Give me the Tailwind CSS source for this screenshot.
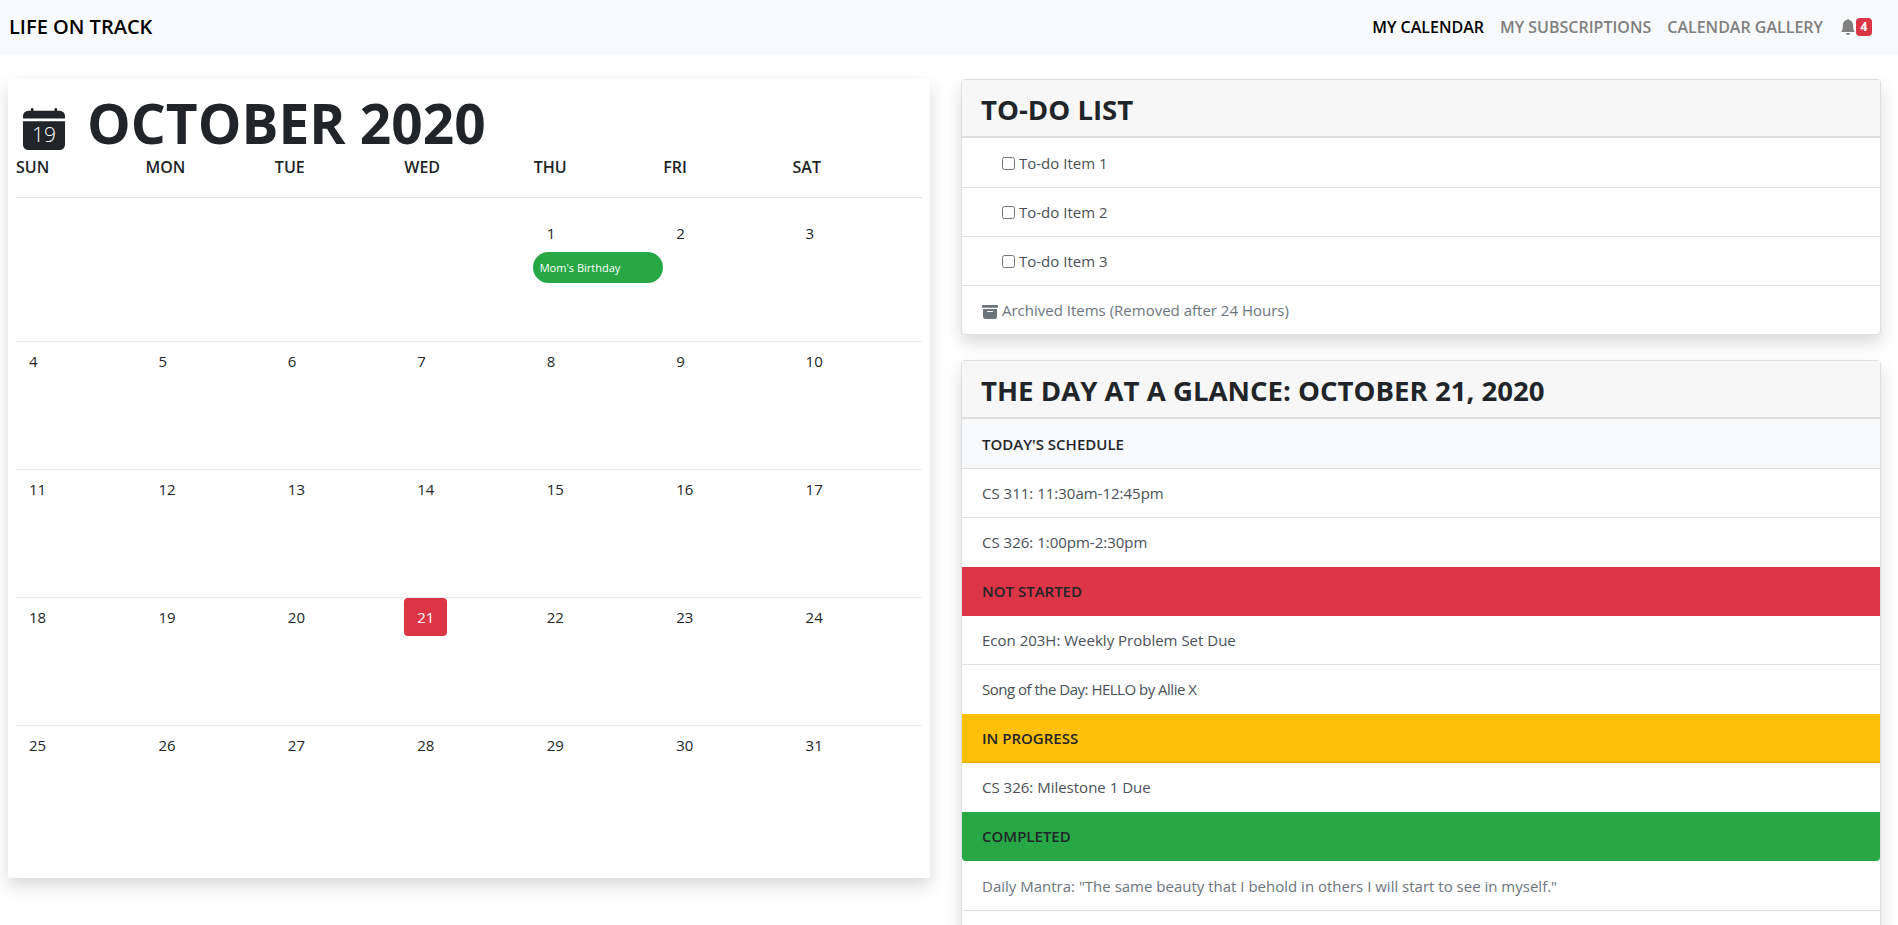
<!DOCTYPE html>
<html lang="en">
<head>
  <meta charset="UTF-8">
  <title>Life On Track</title>
  <meta name="viewport" content="width=device-width, initial-scale=1.0">
  <script src="https://cdn.jsdelivr.net/npm/@tailwindcss/browser@4"></script>
</head>
<body class="h-screen overflow-hidden bg-white font-['Open_Sans',sans-serif] text-[15px] leading-6 text-[#212529]">

  <!-- Navbar -->
  <nav class="flex h-[55px] items-center justify-between bg-[#f8f9fa] pb-[2px] pl-[9px] pr-[26px]">
    <a class="text-[20px] font-semibold text-black">LIFE ON TRACK</a>
    <div class="flex items-center text-[16px] font-semibold text-[#7f7f7f]">
      <a class="text-black">MY CALENDAR</a>
      <a class="ml-4">MY SUBSCRIPTIONS</a>
      <a class="ml-4">CALENDAR GALLERY</a>
      <svg class="ml-[17px] size-4" viewBox="0 0 16 16" fill="currentColor"><path d="M8 16a2 2 0 0 0 2-2H6a2 2 0 0 0 2 2zm.995-14.901a1 1 0 1 0-1.99 0A5.002 5.002 0 0 0 3 6c0 1.098-.5 6-2 7h14c-1.5-1-2-5.902-2-7 0-2.42-1.72-4.44-4.005-4.901z"/></svg>
      <span class="flex h-[18px] w-4 items-center justify-center rounded bg-[#dc3545] text-[12px] font-bold text-white">4</span>
    </div>
  </nav>

  <main class="flex items-start pl-2 pr-[17px] pt-6">

    <!-- Calendar -->
    <section class="h-[799px] w-[922px] shrink-0 bg-white px-2 shadow-[0_8px_16px_rgba(0,0,0,0.15)]">
      <div class="flex h-[76px] items-center pl-[7px] pt-[10px]">
        <svg class="mt-[13px] size-[42px] shrink-0" viewBox="0 0 16 16" fill="#212529">
          <path d="M3.5 0a.5.5 0 0 1 .5.5V1h8V.5a.5.5 0 0 1 1 0V1h1a2 2 0 0 1 2 2v11a2 2 0 0 1-2 2H2a2 2 0 0 1-2-2V5h16V4H0V3a2 2 0 0 1 2-2h1V.5a.5.5 0 0 1 .5-.5z"/>
          <text x="8" y="13.1" text-anchor="middle" font-size="8" font-weight="300" fill="#fff">19</text>
        </svg>
        <h1 class="ml-[22px] text-[55px] leading-none font-bold">OCTOBER 2020</h1>
      </div>

      <div class="grid h-[43px] grid-cols-7 border-b border-[#dee2e6] text-[16px] font-semibold">
        <div>SUN</div><div>MON</div><div>TUE</div><div>WED</div><div>THU</div><div>FRI</div><div>SAT</div>
      </div>

      <!-- Week 1 -->
      <div class="grid h-[144px] grid-cols-7 border-b border-[#e9ecef] pt-4">
        <div></div><div></div><div></div><div></div>
        <div>
          <button class="block h-[38px] px-[13px] text-center">1</button>
          <div class="-ml-px flex h-[31px] items-center rounded-2xl bg-[#28a745] px-[7px] text-[11px] text-white">Mom's Birthday</div>
        </div>
        <div><button class="block h-[38px] px-[13px]">2</button></div>
        <div><button class="block h-[38px] px-[13px]">3</button></div>
      </div>

      <div class="grid h-[128px] grid-cols-7 content-start border-b border-[#e9ecef]">
        <button class="h-[38px] w-fit px-[13px]">4</button><button class="h-[38px] w-fit px-[13px]">5</button><button class="h-[38px] w-fit px-[13px]">6</button><button class="h-[38px] w-fit px-[13px]">7</button><button class="h-[38px] w-fit px-[13px]">8</button><button class="h-[38px] w-fit px-[13px]">9</button><button class="h-[38px] w-fit px-[13px]">10</button>
      </div>
      <div class="grid h-[128px] grid-cols-7 content-start border-b border-[#e9ecef]">
        <button class="h-[38px] w-fit px-[13px]">11</button><button class="h-[38px] w-fit px-[13px]">12</button><button class="h-[38px] w-fit px-[13px]">13</button><button class="h-[38px] w-fit px-[13px]">14</button><button class="h-[38px] w-fit px-[13px]">15</button><button class="h-[38px] w-fit px-[13px]">16</button><button class="h-[38px] w-fit px-[13px]">17</button>
      </div>
      <div class="grid h-[128px] grid-cols-7 content-start border-b border-[#e9ecef]">
        <button class="h-[38px] w-fit px-[13px]">18</button><button class="h-[38px] w-fit px-[13px]">19</button><button class="h-[38px] w-fit px-[13px]">20</button><button class="h-[38px] w-[43px] rounded bg-[#dc3545] text-white">21</button><button class="h-[38px] w-fit px-[13px]">22</button><button class="h-[38px] w-fit px-[13px]">23</button><button class="h-[38px] w-fit px-[13px]">24</button>
      </div>
      <div class="grid grid-cols-7 content-start">
        <button class="h-[38px] w-fit px-[13px]">25</button><button class="h-[38px] w-fit px-[13px]">26</button><button class="h-[38px] w-fit px-[13px]">27</button><button class="h-[38px] w-fit px-[13px]">28</button><button class="h-[38px] w-fit px-[13px]">29</button><button class="h-[38px] w-fit px-[13px]">30</button><button class="h-[38px] w-fit px-[13px]">31</button>
      </div>
    </section>

    <div class="ml-[31px] min-w-0 flex-1">

      <!-- To-do list -->
      <section class="rounded border border-[#dfdfdf] bg-white shadow-[0_8px_16px_rgba(0,0,0,0.15)]">
        <h3 class="flex h-[58px] items-center border-b-2 border-[#dfdfdf] bg-[#f7f7f7] pl-[19px] pt-[2px] text-[27.6px] font-bold">TO-DO LIST</h3>
        <div class="flex h-[50px] items-center border-b border-[#dfdfdf] pl-10 pt-px text-[#495057]"><input type="checkbox" class="mr-1 size-[13px] appearance-auto">To-do Item 1</div>
        <div class="flex h-[49px] items-center border-b border-[#dfdfdf] pl-10 text-[#495057]"><input type="checkbox" class="mr-1 size-[13px] appearance-auto">To-do Item 2</div>
        <div class="flex h-[49px] items-center border-b border-[#dfdfdf] pl-10 text-[#495057]"><input type="checkbox" class="mr-1 size-[13px] appearance-auto">To-do Item 3</div>
        <div class="flex h-[48px] items-center pl-5 text-[#6c757d]">
          <svg class="mr-1 mt-[3px] size-4" viewBox="0 0 16 16" fill="currentColor"><path d="M12.643 15C13.979 15 15 13.845 15 12.5V5H1v7.5C1 13.845 2.021 15 3.357 15h9.286zM5.5 7h5a.5.5 0 0 1 0 1h-5a.5.5 0 0 1 0-1zM.8 1a.8.8 0 0 0-.8.8V3a.8.8 0 0 0 .8.8h14.4A.8.8 0 0 0 16 3V1.8a.8.8 0 0 0-.8-.8H.8z"/></svg>
          Archived Items (Removed after 24 Hours)
        </div>
      </section>

      <!-- Day at a glance -->
      <section class="mt-[25px] rounded border border-[#dfdfdf] bg-white shadow-[0_8px_16px_rgba(0,0,0,0.15)]">
        <h3 class="flex h-[58px] items-center border-b-2 border-[#dfdfdf] bg-[#f7f7f7] pl-[19px] pt-[2px] text-[27.6px] font-bold">THE DAY AT A GLANCE: OCTOBER 21, 2020</h3>
        <div class="flex h-[50px] items-center border-b border-[#dfdfdf] bg-[#f8f9fa] px-5 pt-px font-semibold">TODAY'S SCHEDULE</div>
        <div class="flex h-[49px] items-center border-b border-[#dfdfdf] px-5 text-[#495057]">CS 311: 11:30am-12:45pm</div>
        <div class="flex h-[49px] items-center px-5 pb-[2px] text-[#495057]">CS 326: 1:00pm-2:30pm</div>
        <div class="flex h-[49px] items-center bg-[#dc3545] px-5 pb-[2px] font-semibold text-[#212529]">NOT STARTED</div>
        <div class="flex h-[49px] items-center border-b border-[#dfdfdf] px-5 text-[#495057]">Econ 203H: Weekly Problem Set Due</div>
        <div class="flex h-[49px] items-center px-5 pb-[2px] tracking-[-0.5px] text-[#495057]">Song of the Day: HELLO by Allie X</div>
        <div class="flex h-[49px] items-center border-b border-[#e0a800] bg-[#ffc107] px-5 font-semibold text-[#212529]">IN PROGRESS</div>
        <div class="flex h-[49px] items-center px-5 pb-[2px] text-[#495057]">CS 326: Milestone 1 Due</div>
        <div class="flex h-[49px] items-center rounded-b bg-[#28a745] px-5 pb-[2px] font-semibold text-[#212529]">COMPLETED</div>
        <div class="flex h-[50px] items-center border-b border-[#dfdfdf] px-5 text-[#6c757d]">Daily Mantra: "The same beauty that I behold in others I will start to see in myself."</div>
        <div class="h-[49px]"></div>
      </section>
    </div>
  </main>

</body>
</html>
